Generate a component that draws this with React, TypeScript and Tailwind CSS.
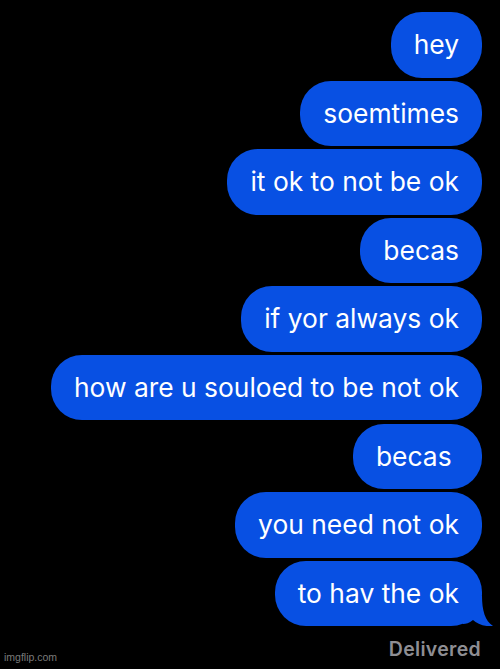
import React from "react";

const msgs = [
  "hey",
  "soemtimes",
  "it ok to not be ok",
  "becas",
  "if yor always ok",
  "how are u souloed to be not ok",
  "becas ",
  "you need not ok",
  "to hav the ok",
];

export default function App() {
  return (
    <div
      className="w-[500px] h-[669px] bg-black relative overflow-hidden"
      style={{ fontFamily: "Inter, 'Noto Sans', sans-serif" }}
    >
      <div className="flex flex-col items-end gap-[3.1px] pt-[12px] pr-[18px]">
        {msgs.map((m, i) => (
          <div key={i} className="relative">
            <div className="h-[65.5px] rounded-[31px] bg-[#0850e3] px-[23px] flex items-center text-white text-[26.4px] whitespace-pre">
              {m}
            </div>
            {i === msgs.length - 1 && (
              <svg
                className="absolute right-[-11px] bottom-0"
                width="30"
                height="30"
                viewBox="0 0 30 30"
              >
                <path
                  d="M0 0 L19 0 C19 14 22 25 30 30 C22 31 14 28 10 24 C6 27 3 28 0 28 Z"
                  fill="#0850e3"
                />
              </svg>
            )}
          </div>
        ))}
      </div>
      <div className="flex justify-end pr-[19px] mt-[9px]">
        <span className="text-[19.5px] font-semibold text-[#8e8e93] tracking-[0.3px]">
          Delivered
        </span>
      </div>
      <div className="absolute left-[4px] bottom-[3px] text-[10.5px] text-[#7a7a7a]" style={{ fontFamily: "'Liberation Sans', Arial, sans-serif" }}>
        imgflip.com
      </div>
    </div>
  );
}
